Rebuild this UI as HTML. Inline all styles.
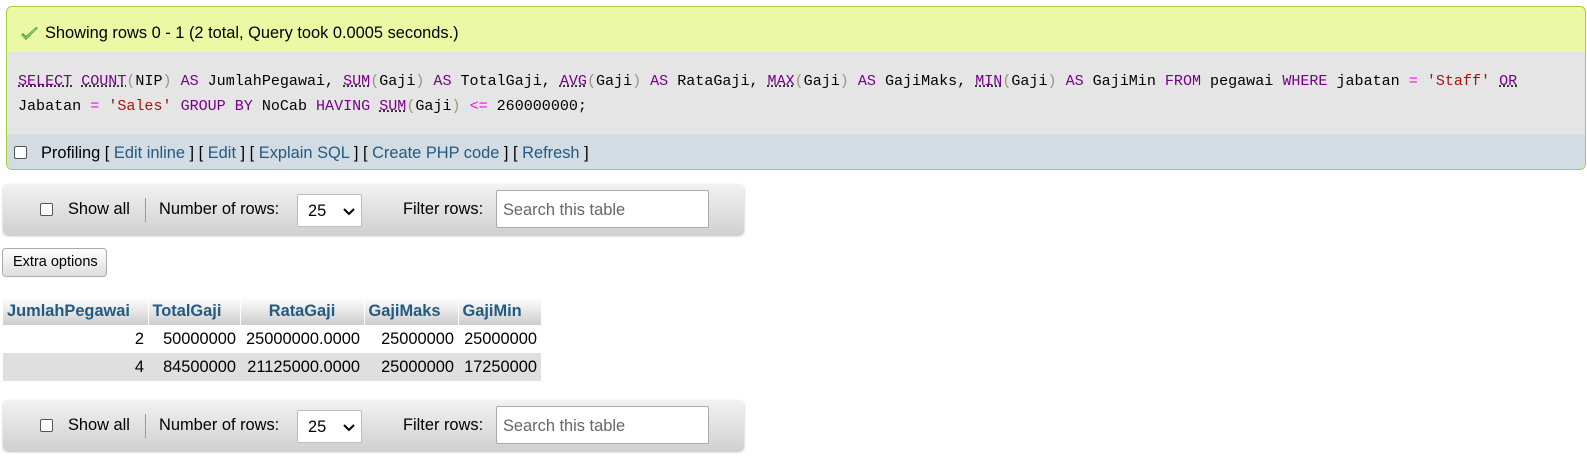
<!DOCTYPE html>
<html><head><meta charset="utf-8"><style>
*{margin:0;padding:0;box-sizing:border-box}
body{width:1587px;height:456px;background:#fff;font-family:"Liberation Sans",Arial,sans-serif;font-size:16.4px;color:#000;position:relative;overflow:hidden}
.abs{position:absolute}
.msg{left:6px;top:6px;width:1580px;height:164px;border:1px solid #a6d13c;border-radius:6px;overflow:hidden;background:#ebf8a4}
.msg .t{position:absolute;left:38px;top:17px;font-size:16.4px}
.sql{position:absolute;left:0;top:45px;width:100%;height:82px;background:#e5e5e5;font-family:"Liberation Mono",monospace;font-size:15.05px;line-height:25px;padding:17px 0 0 11px;white-space:pre;color:#000}
.prof{position:absolute;left:0;top:127px;width:100%;height:37px;background:#d3dce3;padding:10px 0 0 34px;font-size:16.4px}
.k{color:#708;text-decoration:underline dotted #000}
.kw{color:#708}
.s{color:#a11}
.o{color:#f0f}
.p{color:#997}
a{color:#235a81;text-decoration:none}
.cb{position:absolute;width:13px;height:13px;border:1px solid #555;border-radius:2px;background:#fff}
.bar{left:3px;width:741px;height:51px;border-radius:5px;background:linear-gradient(#f2f2f2,#d0d0d0);box-shadow:0 1px 2px #bbb;font-size:16.4px}
.bar span{position:absolute;top:16px}
.sel{position:absolute;left:294px;top:10px;width:65px;height:33px;background:#fff;border:1px solid #bbb;border-radius:2px;font-size:16.4px;padding:7px 0 0 10px}
.inp{position:absolute;left:493px;top:6px;width:213px;height:38px;background:#fff;border:1px solid #aaa;border-radius:2px;padding:10px 0 0 6px;color:#666;font-size:16.4px}
table{position:absolute;left:3px;top:298px;border-collapse:collapse;font-size:16.4px}
th{height:27px;background:linear-gradient(#fff,#ccc);color:#235a81;font-weight:bold;padding:0 4px;border-right:1px solid #fff;text-align:left}
td{height:28px;text-align:right;padding:0 4px}
tr.e td{background:#dfdfdf}
</style></head><body>
<div class="abs msg">
<svg class="abs" style="left:13px;top:20px" width="19" height="14" viewBox="0 0 19 14"><path d="M1 8 L6 13 L18 1 L16 0 L6 9 L3 6 Z" fill="#4a9a2c"/><path d="M2 8 L6 11 L16 1.5" stroke="#9fdc7d" stroke-width="1" fill="none"/></svg>
<div class="t">Showing rows 0 - 1 (2 total, Query took 0.0005 seconds.)</div>
<div class="sql"><span class="k">SELECT</span> <span class="k">COUNT</span><span class="p">(</span>NIP<span class="p">)</span> <span class="kw">AS</span> JumlahPegawai, <span class="k">SUM</span><span class="p">(</span>Gaji<span class="p">)</span> <span class="kw">AS</span> TotalGaji, <span class="k">AVG</span><span class="p">(</span>Gaji<span class="p">)</span> <span class="kw">AS</span> RataGaji, <span class="k">MAX</span><span class="p">(</span>Gaji<span class="p">)</span> <span class="kw">AS</span> GajiMaks, <span class="k">MIN</span><span class="p">(</span>Gaji<span class="p">)</span> <span class="kw">AS</span> GajiMin <span class="kw">FROM</span> pegawai <span class="kw">WHERE</span> jabatan <span class="o">=</span> <span class="s">'Staff'</span> <span class="k">OR</span>
Jabatan <span class="o">=</span> <span class="s">'Sales'</span> <span class="kw">GROUP BY</span> NoCab <span class="kw">HAVING</span> <span class="k">SUM</span><span class="p">(</span>Gaji<span class="p">)</span> <span class="o">&lt;=</span> 260000000;</div>
<div class="prof"><div class="cb" style="left:7px;top:12px"></div>Profiling [ <a>Edit inline</a> ] [ <a>Edit</a> ] [ <a>Explain SQL</a> ] [ <a>Create PHP code</a> ] [ <a>Refresh</a> ]</div>
</div>

<div class="abs bar" style="top:184px">
<div class="cb" style="left:37px;top:19px"></div><span style="left:65px">Show all</span>
<div class="abs" style="left:142px;top:14px;width:1px;height:24px;background:#999"></div>
<span style="left:156px">Number of rows:</span>
<div class="sel">25<svg class="abs" style="left:45px;top:13px" width="12" height="8"><path d="M1 1 L6 6 L11 1" stroke="#000" stroke-width="2" fill="none"/></svg></div>
<span style="left:400px">Filter rows:</span>
<div class="inp">Search this table</div>
</div>

<div class="abs" style="left:2px;top:248px;width:105px;height:29px;border:1px solid #aaa;border-radius:4px;background:linear-gradient(#fff,#ddd);font-size:14.5px;padding:5px 0 0 10px">Extra options</div>

<table>
<tr><th style="width:145px">JumlahPegawai</th><th style="width:92px">TotalGaji</th><th style="width:124px;text-align:center">RataGaji</th><th style="width:94px">GajiMaks</th><th style="width:83px">GajiMin</th></tr>
<tr><td>2</td><td>50000000</td><td>25000000.0000</td><td>25000000</td><td>25000000</td></tr>
<tr class="e"><td>4</td><td>84500000</td><td>21125000.0000</td><td>25000000</td><td>17250000</td></tr>
</table>

<div class="abs bar" style="top:400px">
<div class="cb" style="left:37px;top:19px"></div><span style="left:65px">Show all</span>
<div class="abs" style="left:142px;top:14px;width:1px;height:24px;background:#999"></div>
<span style="left:156px">Number of rows:</span>
<div class="sel">25<svg class="abs" style="left:45px;top:13px" width="12" height="8"><path d="M1 1 L6 6 L11 1" stroke="#000" stroke-width="2" fill="none"/></svg></div>
<span style="left:400px">Filter rows:</span>
<div class="inp">Search this table</div>
</div>
</body></html>
